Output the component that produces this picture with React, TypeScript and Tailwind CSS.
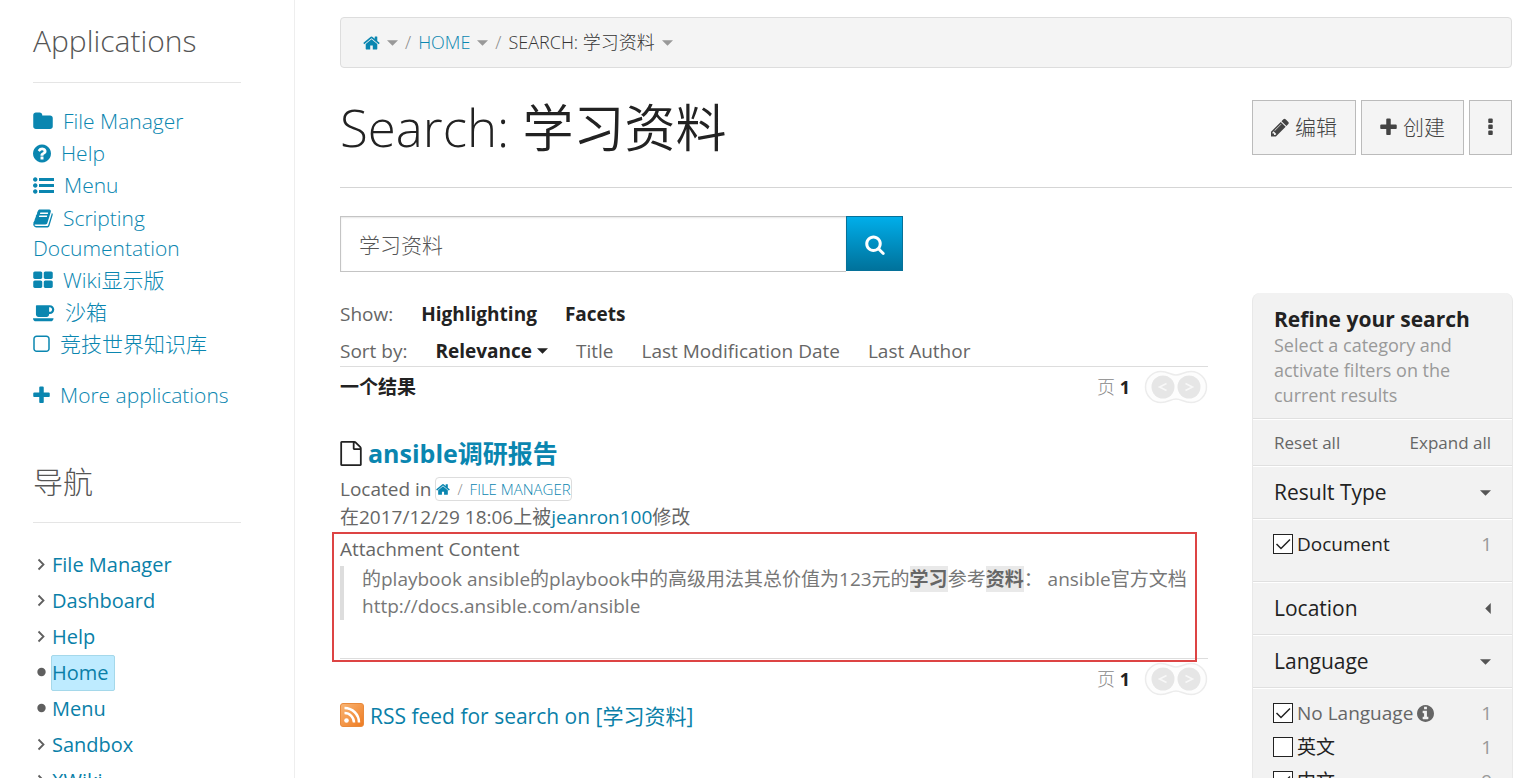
import { useState, type ReactNode } from "react";

const glyphs = {
  home: {
    box: "64 0 1664 1792",
    d: "M1472 992v480q0 26-19 45t-45 19h-384v-384h-256v384h-384q-26 0-45-19t-19-45v-480q0-1 .5-3t.5-3l575-474 575 474q1 2 1 6zm223-69l-62 74q-8 9-21 11h-3q-13 0-21-7l-692-577-692 577q-12 8-24 7-13-2-21-11l-62-74q-8-10-7-23.5t11-21.5l719-599q32-26 76-26t76 26l244 204v-195q0-14 9-23t23-9h192q14 0 23 9t9 23v408l219 182q10 8 11 21.5t-7 23.5z",
  },
  folder: {
    box: "64 0 1664 1792",
    d: "M1728 608v704q0 92-66 158t-158 66h-1216q-92 0-158-66t-66-158v-960q0-92 66-158t158-66h320q92 0 158 66t66 158v32h672q92 0 158 66t66 158z",
  },
  help: {
    box: "128 0 1536 1792",
    d: "M1024 1376v-192q0-14-9-23t-23-9h-192q-14 0-23 9t-9 23v192q0 14 9 23t23 9h192q14 0 23-9t9-23zm256-672q0-88-55.5-163t-138.5-116-170-41q-243 0-371 213-15 24 8 42l132 100q7 6 19 6 16 0 25-12 53-68 86-92 34-24 86-24 48 0 85.5 26t37.5 59q0 38-20 61t-68 45q-63 28-115.5 86.5t-52.5 125.5v36q0 14 9 23t23 9h192q14 0 23-9t9-23q0-19 21.5-49.5t54.5-49.5q32-18 49-28.5t46-35 44.5-48 28-60.5 12.5-81zm384 192q0 209-103 385.5t-279.5 279.5-385.5 103-385.5-103-279.5-279.5-103-385.5 103-385.5 279.5-279.5 385.5-103 385.5 103 279.5 279.5 103 385.5z",
  },
  list: {
    box: "0 0 1792 1792",
    d: "M384 1408q0 80-56 136t-136 56-136-56-56-136 56-136 136-56 136 56 56 136zm0-512q0 80-56 136t-136 56-136-56-56-136 56-136 136-56 136 56 56 136zm1408 416v192q0 13-9.5 22.5t-22.5 9.5h-1216q-13 0-22.5-9.5t-9.5-22.5v-192q0-13 9.5-22.5t22.5-9.5h1216q13 0 22.5 9.5t9.5 22.5zm-1408-928q0 80-56 136t-136 56-136-56-56-136 56-136 136-56 136 56 56 136zm1408 416v192q0 13-9.5 22.5t-22.5 9.5h-1216q-13 0-22.5-9.5t-9.5-22.5v-192q0-13 9.5-22.5t22.5-9.5h1216q13 0 22.5 9.5t9.5 22.5zm0-512v192q0 13-9.5 22.5t-22.5 9.5h-1216q-13 0-22.5-9.5t-9.5-22.5v-192q0-13 9.5-22.5t22.5-9.5h1216q13 0 22.5 9.5t9.5 22.5z",
  },
  book: {
    box: "64 0 1664 1792",
    d: "M1703 478q40 57 18 129l-275 906q-19 64-76.5 107.5t-122.5 43.5h-923q-77 0-148.5-53.5t-99.5-131.5q-24-67-2-127 0-4 3-27t4-37q1-8-3-21.5t-3-19.5q2-11 8-21t16.5-23.5 16.5-23.5q23-38 45-91.5t30-91.5q3-10 .5-30t-.5-28q3-11 17-28t17-23q21-36 42-92t25-90q1-9-2.500-32t.5-28q4-13 22-30.5t22-22.5q19-26 42.5-84.5t27.5-96.5q1-8-3-25.5t-2-26.5q2-8 9-18t18-23 17-21q8-12 16.5-30.5t15-35 16-36 19.5-32 26.5-23.5 36-11.5 47.5 5.5l-1 3q38-9 51-9h761q74 0 114 56t18 130l-274 906q-36 119-71.5 153.5t-128.5 34.5h-869q-27 0-38 15-11 16-1 43 24 70 144 70h923q29 0 56-15.5t35-41.5l300-987q7-22 5-57 38 15 59 43zm-1064 2q-4 13 2 22.5t20 9.5h608q13 0 25.5-9.5t16.5-22.5l21-64q4-13-2-22.5t-20-9.5h-608q-13 0-25.5 9.5t-16.5 22.5zm-83 256q-4 13 2 22.5t20 9.5h608q13 0 25.5-9.5t16.5-22.5l21-64q4-13-2-22.5t-20-9.5h-608q-13 0-25.5 9.5t-16.5 22.5z",
  },
  tiles: {
    box: "64 0 1664 1792",
    d: "M832 1024v384q0 52-38 90t-90 38h-512q-52 0-90-38t-38-90v-384q0-52 38-90t90-38h512q52 0 90 38t38 90zm0-768v384q0 52-38 90t-90 38h-512q-52 0-90-38t-38-90v-384q0-52 38-90t90-38h512q52 0 90 38t38 90zm896 768v384q0 52-38 90t-90 38h-512q-52 0-90-38t-38-90v-384q0-52 38-90t90-38h512q52 0 90 38t38 90zm0-768v384q0 52-38 90t-90 38h-512q-52 0-90-38t-38-90v-384q0-52 38-90t90-38h512q52 0 90 38t38 90z",
  },
  cup: {
    box: "0 0 1920 1792",
    d: "M1664 640q0-80-56-136t-136-56h-64v384h64q80 0 136-56t56-136zm-1664 768h1792q0 106-75 181t-181 75h-1280q-106 0-181-75t-75-181zm1856-768q0 159-112.5 271.5t-271.5 112.5h-64v32q0 92-66 158t-158 66h-704q-92 0-158-66t-66-158v-736q0-26 19-45t45-19h1152q159 0 271.5 112.5t112.5 271.5z",
  },
  square: {
    box: "192 0 1408 1792",
    d: "M1312 256h-832q-66 0-113 47t-47 113v832q0 66 47 113t113 47h832q66 0 113-47t47-113v-832q0-66-47-113t-113-47zm288 160v832q0 119-84.5 203.5t-203.5 84.5h-832q-119 0-203.5-84.5t-84.5-203.5v-832q0-119 84.5-203.5t203.5-84.5h832q119 0 203.5 84.5t84.5 203.5z",
  },
  plus: {
    box: "192 0 1408 1792",
    d: "M1600 736v192q0 40-28 68t-68 28h-416v416q0 40-28 68t-68 28h-192q-40 0-68-28t-28-68v-416h-416q-40 0-68-28t-28-68v-192q0-40 28-68t68-28h416v-416q0-40 28-68t68-28h192q40 0 68 28t28 68v416h416q40 0 68 28t28 68z",
  },
  pencil: {
    box: "128 0 1536 1792",
    d: "M491 1536l91-91-235-235-91 91v107h128v128h107zm523-928q0-22-22-22-10 0-17 7l-542 542q-7 7-7 17 0 22 22 22 10 0 17-7l542-542q7-7 7-17zm-54-192l416 416-832 832h-416v-416zm683 96q0 53-37 90l-166 166-416-416 166-165q36-38 90-38 53 0 91 38l235 234q37 39 37 91z",
  },
  dots: {
    box: "704 0 384 1792",
    d: "M1088 1248v192q0 40-28 68t-68 28h-192q-40 0-68-28t-28-68v-192q0-40 28-68t68-28h192q40 0 68 28t28 68zm0-512v192q0 40-28 68t-68 28h-192q-40 0-68-28t-28-68v-192q0-40 28-68t68-28h192q40 0 68 28t28 68zm0-512v192q0 40-28 68t-68 28h-192q-40 0-68-28t-28-68v-192q0-40 28-68t68-28h192q40 0 68 28t28 68z",
  },
  search: {
    box: "64 0 1664 1792",
    d: "M1216 832q0-185-131.5-316.5t-316.5-131.5-316.5 131.5-131.5 316.5 131.5 316.5 316.5 131.5 316.5-131.5 131.5-316.5zm512 832q0 52-38 90t-90 38q-54 0-90-38l-343-342q-179 124-399 124-143 0-273.5-55.5t-225-150-150-225-55.5-273.5 55.5-273.5 150-225 225-150 273.5-55.5 273.5 55.5 225 150 150 225 55.5 273.5q0 220-124 399l343 343q37 37 37 90z",
  },
  file: {
    box: "128 0 1536 1792",
    d: "M1596 380q28 28 48 76t20 88v1152q0 40-28 68t-68 28h-1344q-40 0-68-28t-28-68v-1600q0-40 28-68t68-28h896q40 0 88 20t76 48zm-444-244v376h376q-10-29-22-41l-313-313q-12-12-41-22zm384 1528v-1024h-416q-40 0-68-28t-28-68v-416h-768v1536h1280z",
  },
  info: {
    box: "128 128 1536 1536",
    d: "M1152 1376v-160q0-14-9-23t-23-9h-96v-512q0-14-9-23t-23-9h-320q-14 0-23 9t-9 23v160q0 14 9 23t23 9h96v320h-96q-14 0-23 9t-9 23v160q0 14 9 23t23 9h448q14 0 23-9t9-23zm-128-896v-160q0-14-9-23t-23-9h-192q-14 0-23 9t-9 23v160q0 14 9 23t23 9h192q14 0 23-9t9-23zm640 416q0 209-103 385.5t-279.5 279.5-385.5 103-385.5-103-279.5-279.5-103-385.5 103-385.5 279.5-279.5 385.5-103 385.5 103 279.5 279.5 103 385.5z",
  },
};

type GlyphName = keyof typeof glyphs;

function Glyph({ name, className }: { name: GlyphName; className: string }) {
  return (
    <svg viewBox={glyphs[name].box} fill="currentColor" aria-hidden="true" className={className}>
      <path d={glyphs[name].d} />
    </svg>
  );
}

function Caret({ className }: { className: string }) {
  return (
    <svg viewBox="0 0 12 6" fill="currentColor" aria-hidden="true" className={className}>
      <path d="M0 0h12L6 6z" />
    </svg>
  );
}

const applications: { label: string; icon: GlyphName; size: string; row: string }[] = [
  { label: "File Manager", icon: "folder", size: "w-5", row: "leading-[29px]" },
  { label: "Help", icon: "help", size: "w-[18px]", row: "leading-[29px]" },
  { label: "Menu", icon: "list", size: "w-[21px]", row: "leading-[29px]" },
  { label: "Scripting Documentation", icon: "book", size: "w-5", row: "leading-[30px]" },
  { label: "Wiki显示版", icon: "tiles", size: "w-5", row: "leading-[29px]" },
  { label: "沙箱", icon: "cup", size: "w-[22px]", row: "leading-[29px]" },
  { label: "竞技世界知识库", icon: "square", size: "w-[17px]", row: "leading-[29px]" },
];

const pages = [
  { label: "File Manager", leaf: false },
  { label: "Dashboard", leaf: false },
  { label: "Help", leaf: false },
  { label: "Home", leaf: true },
  { label: "Menu", leaf: true },
  { label: "Sandbox", leaf: false },
  { label: "XWiki", leaf: false },
];

function Sidebar() {
  return (
    <aside className="w-[295px] shrink-0 border-r border-[#eeeeee] pr-[53px] pl-[33px]">
      <section>
        <h2 className="border-b border-[#e5e5e5] pt-[19px] pb-[19px] text-[30px] leading-[44px] font-light text-[#555]">
          Applications
        </h2>
        <ul className="mt-6 flex flex-col gap-[3px] text-[21px] font-light text-[#0a86b0]">
          {applications.map((app) => (
            <li key={app.label} className={app.row}>
              <a href="#app">
                <Glyph name={app.icon} className={`${app.size} mr-[10px] -mt-1 inline-block h-[21px]`} />
                {app.label}
              </a>
            </li>
          ))}
        </ul>
        <a href="#more" className="mt-[22px] block text-[21px] leading-[29px] font-light text-[#0a86b0]">
          <Glyph name="plus" className="-mt-1 mr-[10px] inline-block h-[21px] w-[17px]" />
          More applications
        </a>
      </section>
      <section className="mt-[50px]">
        <h2 className="border-b border-[#e5e5e5] pb-[18px] text-[30px] leading-[44px] font-light text-[#555]">导航</h2>
        <ul className="mt-6 text-[20px] leading-[34px] text-[#0a7fa8]">
          {pages.map((page) => (
            <li key={page.label} className="flex items-center">
              <svg viewBox="0 0 18 36" aria-hidden="true" className="h-9 w-[18px] text-[#5f5f5f]">
                {page.leaf ? (
                  <circle cx="8.5" cy="17" r="4.2" fill="currentColor" />
                ) : (
                  <path d="M5.5 12.500l5 5-5 5" fill="none" stroke="currentColor" strokeWidth="1.8" />
                )}
              </svg>
              <a
                href="#page"
                className={
                  page.label === "Home"
                    ? "rounded-xs border border-[#a5d8ea] bg-[#beebff] pr-[5px]"
                    : "border border-transparent pr-[5px]"
                }
              >
                {page.label}
              </a>
            </li>
          ))}
        </ul>
      </section>
    </aside>
  );
}

function Breadcrumb() {
  return (
    <nav
      aria-label="Breadcrumb"
      className="flex h-[51px] items-center rounded border border-[#dddddd] bg-[#f4f4f4] px-[22px] text-[18px] font-light text-[#333]"
    >
      <a href="#home" aria-label="Home" className="text-[#0a86b0]">
        <Glyph name="home" className="h-[18px] w-[17px]" />
      </a>
      <Caret className="ml-[7px] h-[6px] w-[11px] text-[#999]" />
      <span className="mx-[7px] text-[#888]">/</span>
      <a href="#home" className="text-[#0a86b0]">HOME</a>
      <Caret className="ml-[7px] h-[6px] w-[11px] text-[#999]" />
      <span className="mx-[7px] text-[#888]">/</span>
      <span>SEARCH: 学习资料</span>
      <Caret className="ml-[7px] h-[6px] w-[11px] text-[#999]" />
    </nav>
  );
}

function ToolButton({ children, label }: { children: ReactNode; label?: string }) {
  return (
    <button
      type="button"
      aria-label={label}
      className="flex h-[55px] items-center gap-[6px] border border-[#bbbbbb] bg-[#f4f4f4] px-[18px] text-[21px] font-light text-[#444]"
    >
      {children}
    </button>
  );
}

function Pager() {
  return (
    <div className="flex h-10 items-center justify-end text-[18px] font-light text-[#888]">
      <span>
        页 <strong className="font-bold text-[#222]">1</strong>
      </span>
      <svg viewBox="0 0 64 34" aria-hidden="true" className="ml-[14px] h-[34px] w-16">
        <path
          d="M17 1.500c7 0 10 3.500 15 3.500s8-3.500 15-3.500a15.500 15.500 0 0 1 0 31c-7 0-10-3.500-15-3.500s-8 3.500-15 3.500a15.500 15.500 0 0 1 0-31z"
          fill="#fdfdfd"
          stroke="#ececec"
          strokeWidth="1.500"
        />
        <circle cx="19" cy="17" r="11.500" fill="#e6e6e6" />
        <circle cx="45" cy="17" r="11.500" fill="#e6e6e6" />
        <path d="M22.500 13.500l-7 3.500 7 3.500M41.500 13.500l7 3.500-7 3.500" fill="none" stroke="#f8f8f8" strokeWidth="1.600" />
      </svg>
    </div>
  );
}

function Result() {
  return (
    <article className="relative mt-6 border-b border-[#dddddd] text-[19px] leading-7 text-[#666]">
      <h2 className="flex h-11 items-center gap-[6px] text-[25px] font-bold text-[#0a86b0]">
        <Glyph name="file" className="h-[25px] w-[22px] text-[#222]" />
        <a href="#result">ansible调研报告</a>
      </h2>
      <div className="flex items-center gap-1">
        Located in
        <span className="flex h-6 items-center rounded border border-[#dddddd] text-[15px] font-light text-[#0a86b0]">
          <a href="#home" aria-label="Home">
            <Glyph name="home" className="h-[15px] w-[14px]" />
          </a>
          <span className="mx-[7px] text-[#888]">/</span>
          <a href="#files">FILE MANAGER</a>
        </span>
      </div>
      <p>
        在2017/12/29 18:06上被<a href="#user" className="text-[#0a7fa8]">jeanron100</a>修改
      </p>
      <p className="mt-1">Attachment Content</p>
      <blockquote className="mt-[3px] mb-[38px] border-l-4 border-[#dddddd] pl-[18px] leading-[27px] text-[#777]">
        的playbook ansible的playbook中的高级用法其总价值为123元的
        <strong className="bg-[#e9e9e9] font-bold text-[#666]">学习</strong>参考
        <strong className="bg-[#e9e9e9] font-bold text-[#666]">资料</strong>： ansible官方文档
        <br />
        http://docs.ansible.com/ansible
      </blockquote>
      <div className="pointer-events-none absolute top-[101px] right-[11px] -bottom-1 -left-2 border-2 border-[#dd4444]" />
    </article>
  );
}

function Check({ label, count, checked, muted, info }: { label: string; count: number; checked: boolean; muted?: boolean; info?: boolean }) {
  const [on, setOn] = useState(checked);
  return (
    <li className="flex h-[34px] items-center justify-between text-[19px]">
      <label className={muted ? "flex items-center gap-1 text-[#666]" : "flex items-center gap-1 text-[#222]"}>
        <span className="grid">
          <input
            type="checkbox"
            checked={on}
            onChange={() => setOn(!on)}
            className="col-start-1 row-start-1 h-5 w-5 appearance-none border border-[#222] bg-white"
          />
          {on && (
            <svg viewBox="0 0 20 20" aria-hidden="true" className="pointer-events-none col-start-1 row-start-1 h-5 w-5">
              <path d="M3.500 10l4.500 4.500L17 5.500" fill="none" stroke="#222" strokeWidth="1.500" />
            </svg>
          )}
        </span>
        {label}
        {info && <Glyph name="info" className="h-[17px] w-[17px]" />}
      </label>
      <span className="text-[#999]">{count}</span>
    </li>
  );
}

function FacetTitle({ children, open }: { children: ReactNode; open: boolean }) {
  return (
    <h3 className="border-b border-[#e0e0e0] shadow-[0_1px_0_#fff]">
      <button type="button" className="flex h-[52px] w-full items-center justify-between px-[21px] pt-px text-[21px] text-[#222]">
        {children}
        {open ? (
          <Caret className="h-[6px] w-[11px] text-[#555]" />
        ) : (
          <svg viewBox="0 0 6 12" fill="currentColor" aria-hidden="true" className="h-[11px] w-[6px] text-[#555]">
            <path d="M6 0v12L0 6z" />
          </svg>
        )}
      </button>
    </h3>
  );
}

function Facets() {
  return (
    <aside className="mt-[21px] -mr-px w-[261px] shrink-0 rounded-t-lg border-x border-[#e8e8e8] bg-[#f2f2f2]">
      <header className="border-b border-[#e0e0e0] px-[21px] pt-3 pb-[10px] shadow-[0_1px_0_#fff]">
        <h2 className="text-[21px] leading-7 font-bold text-[#222]">Refine your search</h2>
        <p className="text-[18px] leading-[25px] text-[#999]">Select a category and activate filters on the current results</p>
      </header>
      <div className="flex h-[47px] items-center justify-between border-b border-[#e0e0e0] px-[21px] pt-px text-[17px] text-[#666] shadow-[0_1px_0_#fff]">
        <a href="#reset">Reset all</a>
        <a href="#expand">Expand all</a>
      </div>
      <FacetTitle open>Result Type</FacetTitle>
      <ul className="border-b border-[#e0e0e0] px-5 pt-2 pb-5 shadow-[0_1px_0_#fff]">
        <Check label="Document" count={1} checked />
      </ul>
      <FacetTitle open={false}>Location</FacetTitle>
      <FacetTitle open>Language</FacetTitle>
      <ul className="px-5 pt-2">
        <Check label="No Language" count={1} checked muted info />
        <Check label="英文" count={1} checked={false} />
        <Check label="中文" count={9} checked />
      </ul>
    </aside>
  );
}

export default function App() {
  return (
    <div className="flex h-screen overflow-y-auto bg-white font-['Open_Sans','Noto_Sans_CJK_SC',sans-serif] [scrollbar-width:none]">
      <div className="flex h-max min-h-full w-full">
        <Sidebar />
        <main className="min-w-0 flex-1 pt-[17px] pr-6 pl-[45px]">
          <Breadcrumb />
          <div className="flex items-start justify-between border-b border-[#d5d5d5] pt-6 pb-6">
            <h1 className="text-[51px] leading-[71px] font-light text-[#222]">
              Search: <span className="font-[350]">学习资料</span>
            </h1>
            <div className="flex gap-[5px] pt-2">
              <ToolButton>
                <Glyph name="pencil" className="h-[21px] w-[18px]" />
                编辑
              </ToolButton>
              <ToolButton>
                <Glyph name="plus" className="h-[21px] w-[17px]" />
                创建
              </ToolButton>
              <ToolButton label="More actions">
                <Glyph name="dots" className="h-[21px] w-[5px]" />
              </ToolButton>
            </div>
          </div>
          <form className="mt-7 flex w-[563px] max-w-full" onSubmit={(event) => event.preventDefault()}>
            <input
              type="text"
              aria-label="Search"
              defaultValue="学习资料"
              className="h-14 min-w-0 flex-1 border border-r-0 border-[#c4c4c4] px-[18px] text-[21px] font-light text-[#555] shadow-[inset_0_1px_2px_rgba(0,0,0,0.1)] outline-none"
            />
            <button
              type="submit"
              aria-label="Run search"
              className="flex h-[55px] w-[57px] items-center justify-center border border-[#067199] bg-linear-to-b from-[#00aeea] to-[#00729b] pt-[2px] text-white"
            >
              <Glyph name="search" className="h-[21px] w-5" />
            </button>
          </form>
          <div className="flex items-start gap-11">
            <div className="min-w-0 flex-1 pt-6">
              <div className="flex h-9 items-center gap-7 text-[19px] text-[#666]">
                <span>Show:</span>
                <a href="#highlighting" className="font-bold text-[#222]">Highlighting</a>
                <a href="#facets" className="font-bold text-[#222]">Facets</a>
              </div>
              <div className="flex h-[35px] items-end gap-7 border-b border-[#dddddd] text-[19px] leading-[30px] text-[#666]">
                <span>Sort by:</span>
                <a href="#relevance" className="flex items-center gap-[5px] font-bold text-[#222]">
                  Relevance
                  <Caret className="h-[6px] w-[11px]" />
                </a>
                <a href="#title">Title</a>
                <a href="#date">Last Modification Date</a>
                <a href="#author">Last Author</a>
              </div>
              <div className="flex h-10 items-center justify-between">
                <strong className="text-[19px] text-[#222]">一个结果</strong>
                <Pager />
              </div>
              <Result />
              <Pager />
              <a href="#rss" className="flex h-[36px] items-center gap-[6px] text-[21px] text-[#0a7fa8]">
                <svg viewBox="0 0 24 24" aria-hidden="true" className="mb-1 h-6 w-6">
                  <defs>
                    <linearGradient id="rss" x1="0" y1="0" x2="1" y2="1">
                      <stop offset="0" stopColor="#f9b676" />
                      <stop offset="1" stopColor="#ee7a20" />
                    </linearGradient>
                  </defs>
                  <rect x="0.500" y="0.500" width="23" height="23" rx="2.500" fill="url(#rss)" stroke="#e98a3c" />
                  <circle cx="6.500" cy="17.500" r="2.300" fill="#fff" />
                  <path d="M4.500 10a9.500 9.500 0 0 1 9.500 9.500M4.500 5A14.500 14.500 0 0 1 19 19.500" fill="none" stroke="#fff" strokeWidth="2.500" />
                </svg>
                RSS feed for search on [学习资料]
              </a>
            </div>
            <Facets />
          </div>
        </main>
      </div>
    </div>
  );
}
